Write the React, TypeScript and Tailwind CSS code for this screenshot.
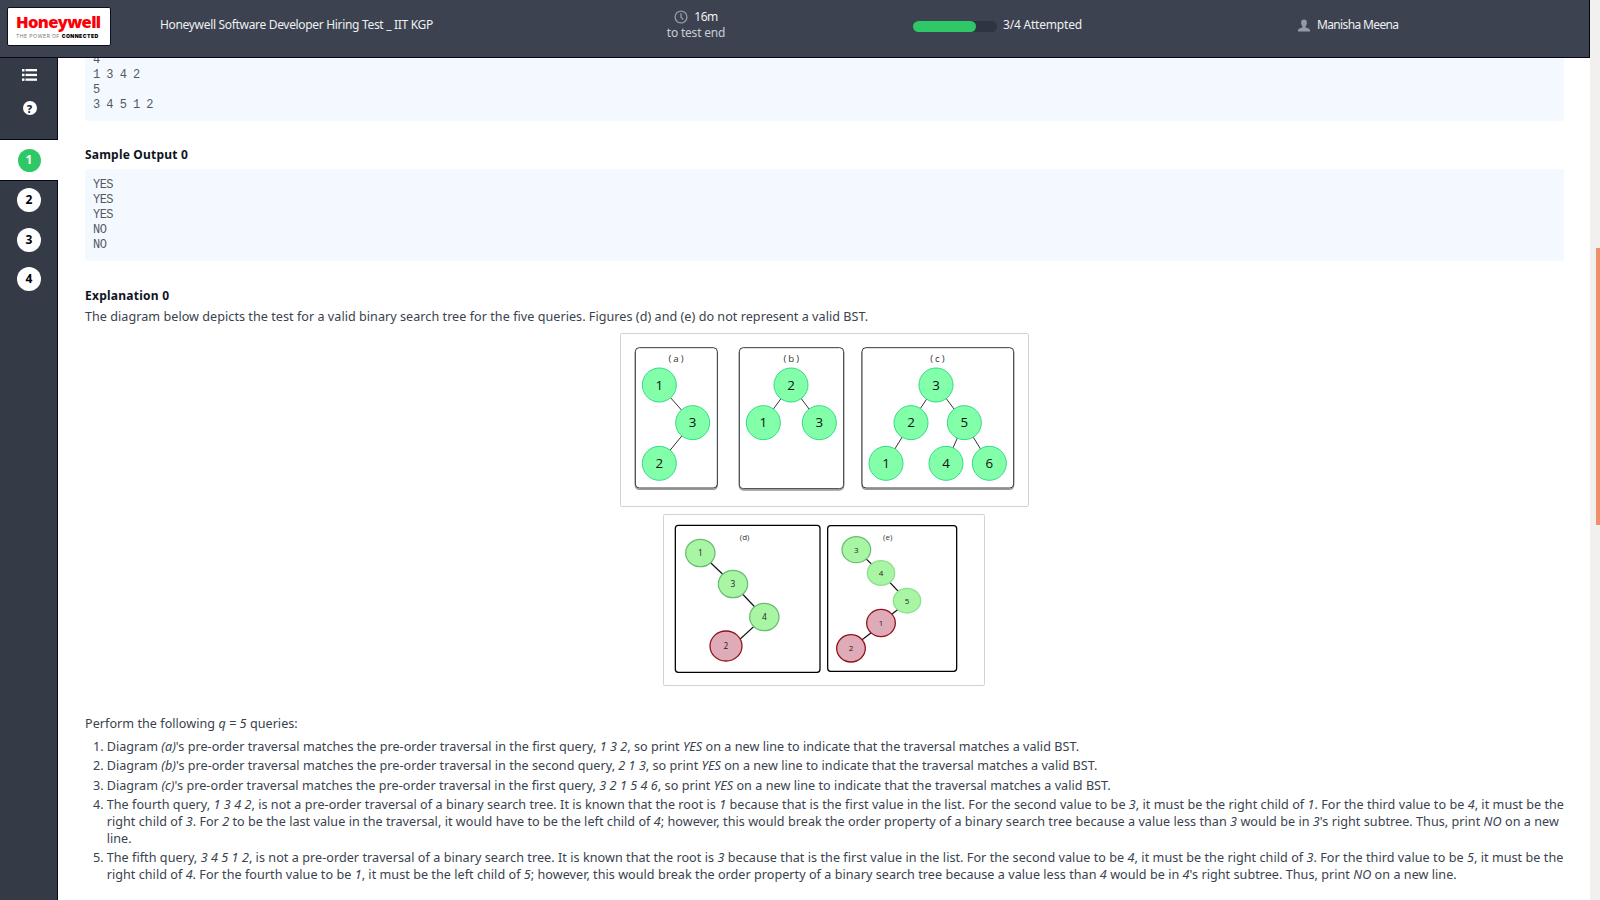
import type { ReactNode } from "react";

type Node = { x: number; y: number; label: string; rx?: number; ry?: number; bad?: boolean; soft?: boolean };
type Edge = [number, number, number, number];

const V = ({ children }: { children: ReactNode }) => <em className="italic">{children}</em>;

const Line = ({ className, children }: { className: string; children: ReactNode }) => (
  <span className={`block whitespace-nowrap ${className}`}>{children}</span>
);

function Header() {
  return (
    <header className="flex h-[58px] w-[1590px] shrink-0 border-r border-b border-[#05061a] bg-[#3c424f] text-[12px] leading-4 text-[#eef0f3]">
      <div className="flex w-[160px] pt-[7px] pl-[7px]">
        <div className="h-[39px] w-[104px] rounded-[2px] border border-[#0b1020] bg-white pt-[5px] pl-[8px]">
          <div className="font-['Open_Sans',sans-serif] text-[16.500px] leading-[18px] font-extrabold tracking-[-0.65px] text-[#fb0007]">
            Honeywell
          </div>
          <div className="mt-[2px] font-[Inter,sans-serif] text-[5.200px] leading-[6px] tracking-[0.39px] whitespace-nowrap text-[#777]">
            THE POWER OF <b className="font-black text-black">CONNECTED</b>
          </div>
        </div>
      </div>
      <div className="w-[453px] pt-[17px] tracking-[-0.32px] whitespace-nowrap">
        Honeywell Software Developer Hiring Test _ IIT KGP
      </div>
      <div className="flex w-[166px] flex-col items-center pt-[9px]">
        <div className="flex items-center gap-[6px] tracking-[-0.5px]">
          <svg className="-mt-px" width="14" height="14" viewBox="0 0 14 14" fill="none" stroke="#8f96a6" strokeWidth="1.4">
            <circle cx="7" cy="7" r="5.9" />
            <path d="M7 3.2V7.3L9.2 9.4" />
          </svg>
          16m
        </div>
        <div className="tracking-[-0.2px] text-[#c9cdd4]">to test end</div>
      </div>
      <div className="flex w-[518px] pt-[17px] pl-[134px]">
        <div className="mt-[4px] h-[11px] w-[84px] rounded-full bg-[#2d3543]">
          <div className="h-full w-[63px] rounded-full bg-[#2ec866]" />
        </div>
        <div className="pl-[6px] tracking-[-0.2px] whitespace-nowrap">3/4 Attempted</div>
      </div>
      <div className="flex gap-[7px] pt-[17px] pl-px">
        <svg className="mt-[2px]" width="12" height="13" viewBox="0 0 12 13" fill="#9299a8">
          <path d="M6 0.4c1.9 0 2.9 1.2 2.9 3.1 0 1.6-.5 2.8-1.3 3.6v1.2c.3.6 4.1 1.1 4.4 2.7V12.6H0V11c.3-1.6 4.1-2.1 4.4-2.7V7.1C3.6 6.3 3.1 5.1 3.1 3.5 3.1 1.6 4.1.4 6 .4z" />
        </svg>
        <span className="tracking-[-0.64px] whitespace-nowrap">Manisha Meena</span>
      </div>
    </header>
  );
}

function Sidebar() {
  return (
    <aside className="flex w-[58px] shrink-0 flex-col bg-[#343a46] text-[12px] font-bold">
      <div className="flex h-[82px] flex-col items-center border-r border-b border-[#05061a] pt-[11px]">
        <svg className="ml-[2px]" width="15" height="12" viewBox="0 0 15 12" fill="#fff">
          <rect x="0" y="0" width="2.5" height="2.5" />
          <rect x="3.5" y="0" width="11.5" height="2.3" />
          <rect x="0" y="4.7" width="2.5" height="2.5" />
          <rect x="3.5" y="4.8" width="11.5" height="2.3" />
          <rect x="0" y="9.4" width="2.5" height="2.5" />
          <rect x="3.5" y="9.5" width="11.5" height="2.3" />
        </svg>
        <span className="mt-[20px] ml-[2px] flex size-[14px] items-center justify-center rounded-full bg-white text-[11px] leading-none font-extrabold text-[#20242e]">
          ?
        </span>
      </div>
      <div className="flex h-[40px] items-center justify-center bg-white">
        <span className="flex size-[23px] items-center justify-center rounded-full bg-[#2ec866] text-white">1</span>
      </div>
      <div className="flex flex-1 flex-col items-center gap-[15.600px] border-t border-r border-[#05061a] pt-[7px] pl-px text-black">
        {["2", "3", "4"].map((n) => (
          <span key={n} className="flex size-[24px] items-center justify-center rounded-full bg-white">
            {n}
          </span>
        ))}
      </div>
    </aside>
  );
}

function Panel({ x, y, w, h, thick }: { x: number; y: number; w: number; h: number; thick?: boolean }) {
  return (
    <g>
      {!thick && <rect x={x} y={y + 4} width={w} height={h} rx="12" fill="none" stroke="#999" strokeWidth="4" />}
      <rect x={x} y={y} width={w} height={h} rx={thick ? 9 : 12} fill="#fff" stroke={thick ? "#000" : "#2a2a2a"} strokeWidth={thick ? 3.8 : 2.8} />
    </g>
  );
}

function Tree({ nodes, edges, size, heavy }: { nodes: Node[]; edges: Edge[]; size: number; heavy?: boolean }) {
  return (
    <g>
      {edges.map(([x1, y1, x2, y2], i) => (
        <line key={i} x1={x1} y1={y1} x2={x2} y2={y2} stroke="#111" strokeWidth={heavy ? 3.6 : 2.6} />
      ))}
      {nodes.map((n, i) => (
        <g key={i}>
          <ellipse
            cx={n.x}
            cy={n.y}
            rx={n.rx ?? 51}
            ry={n.ry ?? 51}
            fill={n.bad ? "#e0abb9" : heavy ? "#a8f5a3" : "#83ffaa"}
            stroke={n.bad ? "#8e1218" : heavy ? (n.soft ? "#8be08c" : "#69bd74") : "#2fdc84"}
            strokeWidth={heavy ? 3.8 : 3}
          />
          <text x={n.x} y={n.y + size * 0.36} textAnchor="middle" fontSize={size} fill={heavy ? "#222" : "#111"}>
            {n.label}
          </text>
        </g>
      ))}
    </g>
  );
}

const caption = (x: number, y: number, t: string, size: number, gap: number) => (
  <text x={x + gap / 2} y={y} textAnchor="middle" fontSize={size} letterSpacing={gap} fill="#333">
    {t}
  </text>
);

function ValidTrees() {
  return (
    <svg className="block font-['Open_Sans',sans-serif]" width="409" height="174" viewBox="30 24 1227 522">
      <rect x="31.5" y="25.5" width="1224" height="519" rx="4" fill="#fff" stroke="#d2d2d2" strokeWidth="3" />
      <Panel x={76} y={68} w={246} h={421} />
      <Panel x={388} y={68} w={313} h={423} />
      <Panel x={756} y={68} w={455} h={421} />
      {caption(198, 111, "(a)", 29, 6)}
      {caption(544, 111, "(b)", 29, 6)}
      {caption(982, 111, "(c)", 29, 6)}
      <Tree
        size={40}
        edges={[[148, 180, 248, 293], [248, 293, 148, 415]]}
        nodes={[{ x: 148, y: 180, label: "1" }, { x: 248, y: 293, label: "3" }, { x: 148, y: 415, label: "2" }]}
      />
      <Tree
        size={40}
        edges={[[543, 180, 460, 293], [543, 180, 628, 293]]}
        nodes={[{ x: 543, y: 180, label: "2" }, { x: 460, y: 293, label: "1" }, { x: 628, y: 293, label: "3" }]}
      />
      <Tree
        size={40}
        edges={[[978, 180, 903, 293], [978, 180, 1063, 293], [903, 293, 828, 415], [1063, 293, 1008, 415], [1063, 293, 1138, 415]]}
        nodes={[
          { x: 978, y: 180, label: "3" },
          { x: 903, y: 293, label: "2" },
          { x: 1063, y: 293, label: "5" },
          { x: 828, y: 415, label: "1" },
          { x: 1008, y: 415, label: "4" },
          { x: 1138, y: 415, label: "6" },
        ]}
      />
    </svg>
  );
}

function InvalidTrees() {
  return (
    <svg className="block font-['Open_Sans',sans-serif]" width="322" height="172" viewBox="39 27 966 516">
      <rect x="40.5" y="28.5" width="963" height="513" rx="4" fill="#fff" stroke="#d2d2d2" strokeWidth="3" />
      <Panel x={76} y={61} w={434} h={441} thick />
      <Panel x={533} y={62} w={387} h={437} thick />
      {caption(284, 106, "(d)", 24, 0)}
      {caption(713, 104, "(e)", 24, 0)}
      <Tree
        heavy
        size={25}
        edges={[[151, 144, 249, 237], [249, 237, 343, 336], [343, 336, 228, 441]]}
        nodes={[
          { x: 151, y: 144, rx: 44, ry: 41, label: "1" },
          { x: 249, y: 237, rx: 44, ry: 41, label: "3" },
          { x: 343, y: 336, rx: 44, ry: 41, label: "4" },
          { x: 228, y: 423, rx: 48, ry: 45, label: "2", bad: true },
        ]}
      />
      <Tree
        heavy
        size={24}
        edges={[[619, 134, 693, 204], [693, 204, 771, 287], [771, 291, 693, 354], [693, 361, 603, 430]]}
        nodes={[
          { x: 619, y: 134, rx: 43, ry: 39, label: "3" },
          { x: 693, y: 204, rx: 41, ry: 37, label: "4", soft: true },
          { x: 771, y: 287, rx: 41, ry: 37, label: "5", soft: true },
          { x: 693, y: 354, rx: 43, ry: 41, label: "1", bad: true },
          { x: 603, y: 430, rx: 43, ry: 41, label: "2", bad: true },
        ]}
      />
    </svg>
  );
}

const steps: ReactNode[] = [
  <Line className="tracking-[0.032px]">
    Diagram <V>(a)</V>'s pre-order traversal matches the pre-order traversal in the first query, <V>1 3 2</V>, so print <V>YES</V> on a new line to indicate that the traversal matches a valid BST.
  </Line>,
  <Line className="tracking-[0.027px]">
    Diagram <V>(b)</V>'s pre-order traversal matches the pre-order traversal in the second query, <V>2 1 3</V>, so print <V>YES</V> on a new line to indicate that the traversal matches a valid BST.
  </Line>,
  <Line className="tracking-[0.045px]">
    Diagram <V>(c)</V>'s pre-order traversal matches the pre-order traversal in the first query, <V>3 2 1 5 4 6</V>, so print <V>YES</V> on a new line to indicate that the traversal matches a valid BST.
  </Line>,
  <>
    <Line className="tracking-[0.042px]">
      The fourth query, <V>1 3 4 2</V>, is not a pre-order traversal of a binary search tree. It is known that the root is <V>1</V> because that is the first value in the list. For the second value to be <V>3</V>, it must be the right child of <V>1</V>. For the third value to be <V>4</V>, it must be the
    </Line>
    <Line className="tracking-[0.040px]">
      right child of <V>3</V>. For <V>2</V> to be the last value in the traversal, it would have to be the left child of <V>4</V>; however, this would break the order property of a binary search tree because a value less than <V>3</V> would be in <V>3</V>'s right subtree. Thus, print <V>NO</V> on a new
    </Line>
    <Line className="tracking-[0.036px]">line.</Line>
  </>,
  <>
    <Line className="tracking-[0.050px]">
      The fifth query, <V>3 4 5 1 2</V>, is not a pre-order traversal of a binary search tree. It is known that the root is <V>3</V> because that is the first value in the list. For the second value to be <V>4</V>, it must be the right child of <V>3</V>. For the third value to be <V>5</V>, it must be the
    </Line>
    <Line className="tracking-[0.037px]">
      right child of <V>4</V>. For the fourth value to be <V>1</V>, it must be the left child of <V>5</V>; however, this would break the order property of a binary search tree because a value less than <V>4</V> would be in <V>4</V>'s right subtree. Thus, print <V>NO</V> on a new line.
    </Line>
  </>,
];

const pre =
  "rounded-[2px] bg-[#f4f9ff] pl-[8px] font-['Liberation_Mono',monospace] text-[12px] leading-[15px] tracking-[-0.53px] text-[#555a61]";

export default function App() {
  return (
    <div className="flex h-[900px] w-[1600px] overflow-hidden bg-white font-['Noto_Sans',sans-serif]">
      <div className="flex w-[1590px] flex-col">
        <Header />
        <div className="flex min-h-0 flex-1">
          <Sidebar />
          <main className="flex-1 overflow-hidden pr-[26.500px] pl-[27px] text-[12.600px] leading-[16.600px] text-[#39424e]">
            <pre className={`${pre} -mt-[7px] h-[69.500px] pt-[2px]`}>{"4\n1 3 4 2\n5\n3 4 5 1 2"}</pre>
            <h3 className="mt-[24.500px] h-[24px] text-[12px] leading-[20px] font-bold tracking-[0.2px] text-[#0e141e]">Sample Output 0</h3>
            <pre className={`${pre} h-[92px] pt-[9px]`}>{"YES\nYES\nYES\nNO\nNO"}</pre>
            <h3 className="mt-[24.500px] text-[12px] leading-[20px] font-bold tracking-[0.25px] text-[#0e141e]">Explanation 0</h3>
            <p className="mt-px leading-[20px] tracking-[0.036px]">
              The diagram below depicts the test for a valid binary search tree for the five queries. Figures (d) and (e) do not represent a valid BST.
            </p>
            <div className="mt-[6.500px] flex flex-col items-center gap-[7px]">
              <ValidTrees />
              <InvalidTrees />
            </div>
            <p className="mt-[30px] tracking-[0.036px]">
              Perform the following <V>q = 5</V> queries:
            </p>
            <ol className="mt-[6px] flex flex-col gap-[3px]">
              {steps.map((s, i) => (
                <li key={i} className="flex">
                  <span className="w-[21.700px] shrink-0 pl-[8px]">{i + 1}.</span>
                  <div>{s}</div>
                </li>
              ))}
            </ol>
          </main>
        </div>
      </div>
      <div className="flex w-[10px] flex-col items-end bg-[#f1f0ef] pt-[248px]">
        <div className="h-[277px] w-[4px] bg-[#f0906a]" />
      </div>
    </div>
  );
}
